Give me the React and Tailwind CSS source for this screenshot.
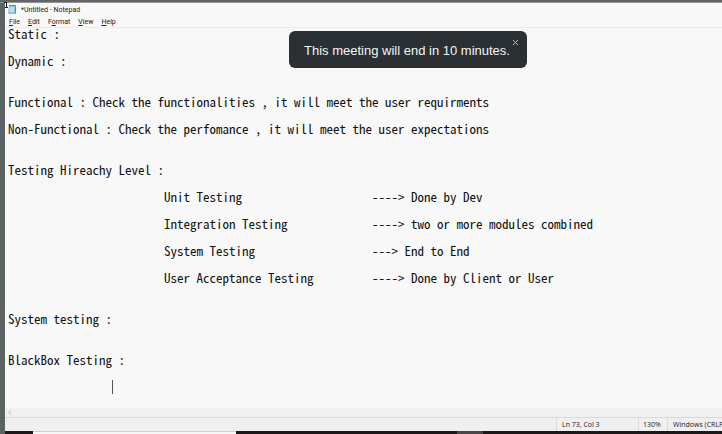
import React from "react";

const sections = [
  ["Static :", "Dynamic :"],
  [
    "Functional : Check the functionalities , it will meet the user requirments",
    "Non-Functional : Check the perfomance , it will meet the user expectations",
  ],
  [
    "Testing Hireachy Level :",
    "\t\t\tUnit Testing\t\t\t----> Done by Dev",
    "\t\t\tIntegration Testing\t\t----> two or more modules combined",
    "\t\t\tSystem Testing\t\t\t---> End to End",
    "\t\t\tUser Acceptance Testing\t\t----> Done by Client or User",
  ],
  ["System testing :"],
];

const menus = ["File", "Edit", "Format", "View", "Help"];

function NotepadIcon() {
  return (
    <svg width="10" height="11" viewBox="0 0 10 11" aria-hidden="true">
      <path d="M2 1h7v8l-1 1H1z" fill="#8fc5d8" />
      <path d="M2 1h7v1H2z" fill="#71878f" />
      <path d="M3 3h4v5H2z" fill="#b9e0eb" />
      <path d="M8 3h1v6l-1 1z" fill="#598ca0" />
    </svg>
  );
}

function Pointer() {
  return (
    <svg className="absolute left-1 top-0" width="6" height="9" viewBox="0 0 6 9" aria-hidden="true">
      <path d="M0 2.5h2M2.5 2v5M1 7.5h3" fill="none" stroke="#17191a" />
    </svg>
  );
}

function Menu({ label }) {
  const accelerator = label === "Format" ? 1 : 0;
  return (
    <button type="button">
      {label.slice(0, accelerator)}
      <span className="underline underline-offset-1">{label[accelerator]}</span>
      {label.slice(accelerator + 1)}
    </button>
  );
}

function Notice() {
  return (
    <div
      role="alert"
      className="absolute left-[289px] top-[31px] flex h-[37px] w-[238px] items-center rounded-md bg-[#2a3033] pl-[15px] font-['Liberation_Sans',sans-serif] text-[13px] text-[#f4f5f5]"
    >
      <span className="whitespace-nowrap pt-0.5">This meeting will end in 10 minutes.</span>
      <button type="button" aria-label="Close" className="absolute right-2 top-2">
        <svg className="block" width="7" height="7" viewBox="0 0 7 7">
          <path d="M1 1l5 5M6 1L1 6" stroke="#b9bdbf" strokeWidth="1" />
        </svg>
      </button>
    </div>
  );
}

export default function App() {
  return (
    <div className="relative flex h-screen flex-col overflow-hidden bg-[#5d6265] font-['Open_Sans','Noto_Sans',sans-serif] text-[#222]">
      <div className="h-[3px] shrink-0 border-b border-[#929696] bg-[#626565]" />
      <div className="ml-[5px] flex min-h-0 flex-1 flex-col bg-[#f8f8f8]">
        <header className="h-[25px] shrink-0 border-b border-[#ececec] font-['Roboto',sans-serif] text-[7px] leading-3">
          <div className="flex h-[13px] items-center gap-1 pl-0.5">
            <NotepadIcon />
            <h1>*Untitled - Notepad</h1>
          </div>
          <nav className="flex h-[11px] items-center gap-2 pl-1">
            {menus.map((m) => (
              <Menu key={m} label={m} />
            ))}
          </nav>
        </header>

        <main
          role="textbox"
          aria-multiline="true"
          aria-label="Document text"
          className="-mt-2 flex min-h-0 flex-1 flex-col gap-3.5 overflow-hidden whitespace-pre pl-[3px] font-['Noto_Sans_Mono_CJK_SC','DejaVu_Sans_Mono',monospace] text-[13px] leading-[27px] text-[#111] [tab-size:8]"
        >
          {sections.map((lines) => (
            <div key={lines[0]}>
              {lines.map((line) => (
                <p key={line}>{line}</p>
              ))}
            </div>
          ))}
          <div>
            <p>BlackBox Testing :</p>
            <p className="flex items-center">
              <span>{"\t\t"}</span>
              <span className="h-3.5 w-px bg-[#555]" />
            </p>
          </div>
        </main>

        <div className="flex h-[9px] shrink-0 items-center bg-[#f0f0f0] pl-[3px]">
          <svg width="4" height="5" viewBox="0 0 4 5" aria-hidden="true">
            <path d="M3 0.5L1 2.5l2 2" fill="none" stroke="#b5b5b5" />
          </svg>
        </div>
        <footer className="flex h-[14px] shrink-0 justify-end border-t border-[#d9d9d9] bg-[#f0f0f0] text-[7px] leading-[14px]">
          <span className="w-[82px] border-l border-[#dcdcdc] pl-[5px]">Ln 73, Col 3</span>
          <span className="w-[29px] border-l border-[#dcdcdc] pl-1">130%</span>
          <span className="w-[55px] overflow-hidden whitespace-nowrap border-l border-[#dcdcdc] pl-[5px]">
            Windows (CRLF)
          </span>
        </footer>
        <div className="flex h-[3px] shrink-0 bg-[#1c1718]">
          <div className="ml-[28px] w-[203px] border-t border-[#d0d0d0] bg-[#f7f7f7]" />
          <div className="ml-[221px] w-[26px] bg-[#4a4546]" />
        </div>
      </div>
      <Pointer />
      <Notice />
    </div>
  );
}
